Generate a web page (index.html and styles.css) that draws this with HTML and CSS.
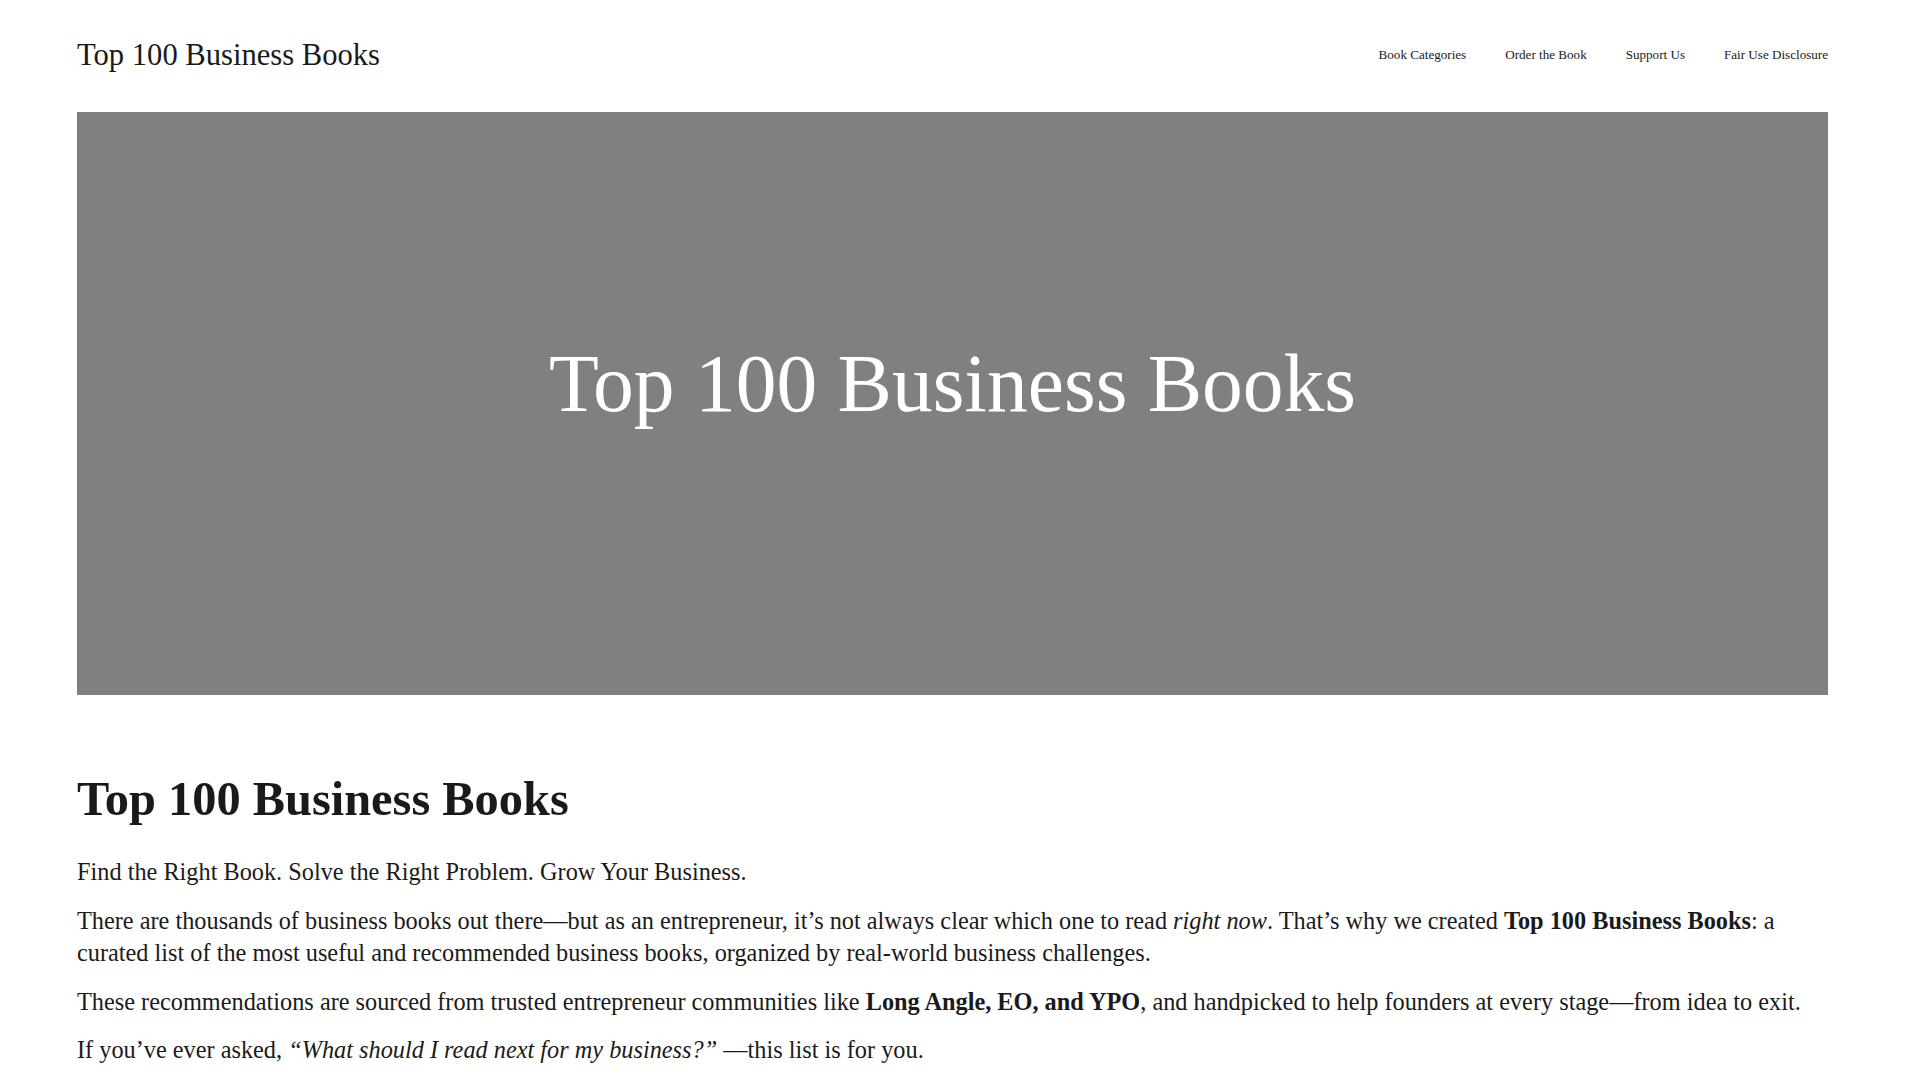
FILE: index.html
```html
<!DOCTYPE html>
<html lang="en">
<head>
<meta charset="utf-8">
<title>Top 100 Business Books</title>
<link rel="stylesheet" href="styles.css">
</head>
<body>
<div class="page">
  <header class="site-header">
    <a class="site-title" href="#">Top 100 Business Books</a>
    <nav class="site-nav">
      <a href="#">Book Categories</a>
      <a href="#">Order the Book</a>
      <a href="#">Support Us</a>
      <a href="#">Fair Use Disclosure</a>
    </nav>
  </header>

  <section class="hero">
    <h1 class="hero-title">Top 100 Business Books</h1>
  </section>

  <main class="content">
    <h2 class="page-heading">Top 100 Business Books</h2>
    <p>Find the Right Book. Solve the Right Problem. Grow Your Business.</p>
    <p>There are thousands of business books out there—but as an entrepreneur, it’s not always clear which one to read <em>right now</em>. That’s why we created <strong>Top 100 Business Books</strong>: a curated list of the most useful and recommended business books, organized by real-world business challenges.</p>
    <p>These recommendations are sourced from trusted entrepreneur communities like <strong>Long Angle, EO, and YPO</strong>, and handpicked to help founders at every stage—from idea to exit.</p>
    <p>If you’ve ever asked, <em>“What should I read next for my business?”</em> —this list is for you.</p>
  </main>
</div>
</body>
</html>
```

FILE: styles.css
```css
html {
  overflow-y: scroll;
}

body {
  margin: 0;
  background: #ffffff;
  color: #1a1a1a;
  font-family: "Liberation Serif", "Times New Roman", serif;
}

.page {
  padding: 0 92px 0 77px;
}

.site-header {
  height: 112px;
  display: flex;
  align-items: center;
  justify-content: space-between;
  padding-bottom: 2px;
  box-sizing: border-box;
}

.site-title {
  font-size: 30.6px;
  color: #1a1a1a;
  text-decoration: none;
}

.site-nav {
  display: flex;
  gap: 39px;
}

.site-nav a {
  font-size: 13.1px;
  color: #1a1a1a;
  text-decoration: none;
}

.hero {
  height: 583px;
  background: #808080;
  display: flex;
  align-items: center;
  justify-content: center;
}

.hero-title {
  margin: 0 0 40px;
  font-size: 81.5px;
  font-weight: 400;
  line-height: 1.2;
  color: #ffffff;
}

.content {
  padding-top: 75px;
  min-height: 7200px;
}

.page-heading {
  margin: 0 0 28px;
  font-size: 48.4px;
  font-weight: 700;
  line-height: 1.2;
  color: #1a1a1a;
}

.content p {
  margin: 0 0 17px;
  font-size: 24.3px;
  line-height: 1.31;
}
```
